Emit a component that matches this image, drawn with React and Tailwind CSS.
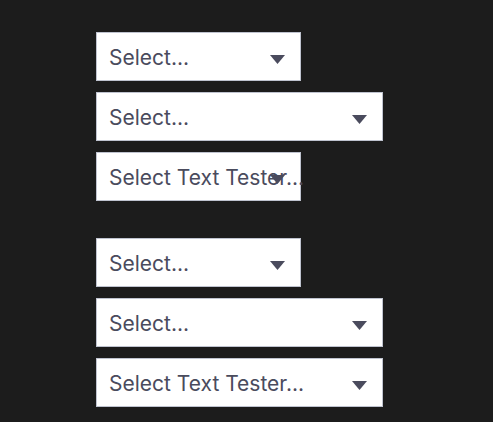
import React from "react";

function Arrow() {
  return (
    <svg width="15" height="9" viewBox="0 0 15 9" className="absolute right-[15px] top-[22px]">
      <polygon points="0,0 15,0 7.5,9" fill="#4a4b5d" />
    </svg>
  );
}

function Select({ text, wide }) {
  return (
    <div
      className={`relative flex h-[49px] items-center border border-[#bfc3cf] bg-white pl-[12px] ${
        wide ? "w-[287px]" : "w-[205px]"
      }`}
    >
      <span className="whitespace-nowrap pt-[2px] text-[21px] text-[#4a4b5d]" style={{ fontFamily: "Inter, sans-serif" }}>
        {text}
      </span>
      <Arrow />
    </div>
  );
}

export default function App() {
  return (
    <div className="min-h-[422px] w-[493px] bg-[#1c1c1c] pl-[96px] pt-[32px]">
      <div className="flex flex-col gap-[11px]">
        <Select text="Select..." />
        <Select text="Select..." wide />
        <Select text="Select Text Tester..." />
      </div>
      <div className="mt-[37px] flex flex-col gap-[11px]">
        <Select text="Select..." />
        <Select text="Select..." wide />
        <Select text="Select Text Tester..." wide />
      </div>
    </div>
  );
}
